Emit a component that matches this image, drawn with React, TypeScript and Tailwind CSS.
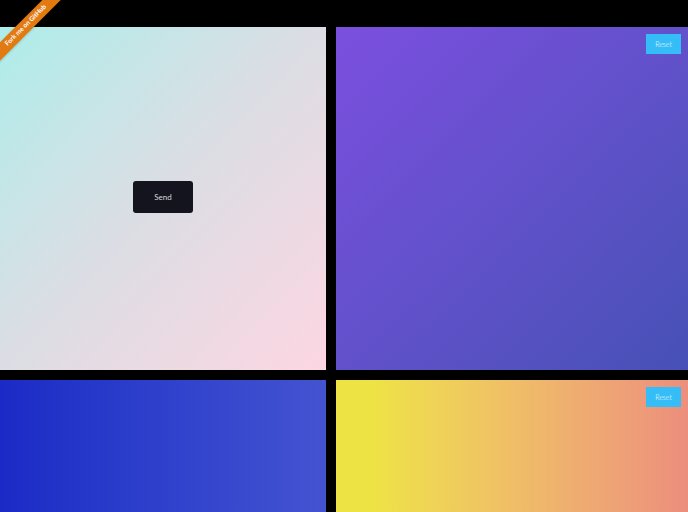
import React from "react"

function ResetButton() {
    return (
        <button className="absolute top-[7px] right-[7px] w-[35px] h-[20px] bg-[#35bdf7] text-white text-[7px] font-light leading-none flex items-center justify-center">
            Reset
        </button>
    )
}

export default function App() {
    return (
        <div
            className="relative h-screen w-full overflow-hidden bg-black"
            style={{ fontFamily: "Lato, 'Open Sans', sans-serif" }}
        >
            {/* Fork ribbon */}
            <div className="absolute left-[-24px] top-[19px] w-[100px] h-[13px] -rotate-45 bg-[#e27a12] z-10 flex items-center justify-center shadow-sm">
                <span className="text-white text-[6.5px] font-bold leading-none whitespace-nowrap">
                    Fork me on GitHub
                </span>
            </div>

            <div className="pt-[27px] flex flex-col gap-[10px]">
                {/* Top row */}
                <div className="flex gap-[10px] h-[343px]">
                    <div className="w-[326px] h-full pb-[3px] bg-gradient-to-br from-[#acedea] via-[#dcdde4] to-[#fcd6e2] flex items-center justify-center">
                        <button className="w-[60px] h-[32px] rounded-[3px] bg-[#14141f] text-[#d6d6dc] text-[8px] font-normal leading-none">
                            Send
                        </button>
                    </div>
                    <div className="relative flex-1 h-full bg-gradient-to-br from-[#7b4fdf] to-[#4651b6]">
                        <ResetButton />
                    </div>
                </div>

                {/* Bottom row */}
                <div className="flex gap-[10px] h-[343px]">
                    <div className="w-[326px] h-full bg-gradient-to-r from-[#1b2ac6] to-[#4453d1]" />
                    <div className="relative flex-1 h-full bg-gradient-to-r from-[#eee344] from-[10%] to-[#ec8e7d]">
                        <ResetButton />
                    </div>
                </div>
            </div>
        </div>
    )
}
